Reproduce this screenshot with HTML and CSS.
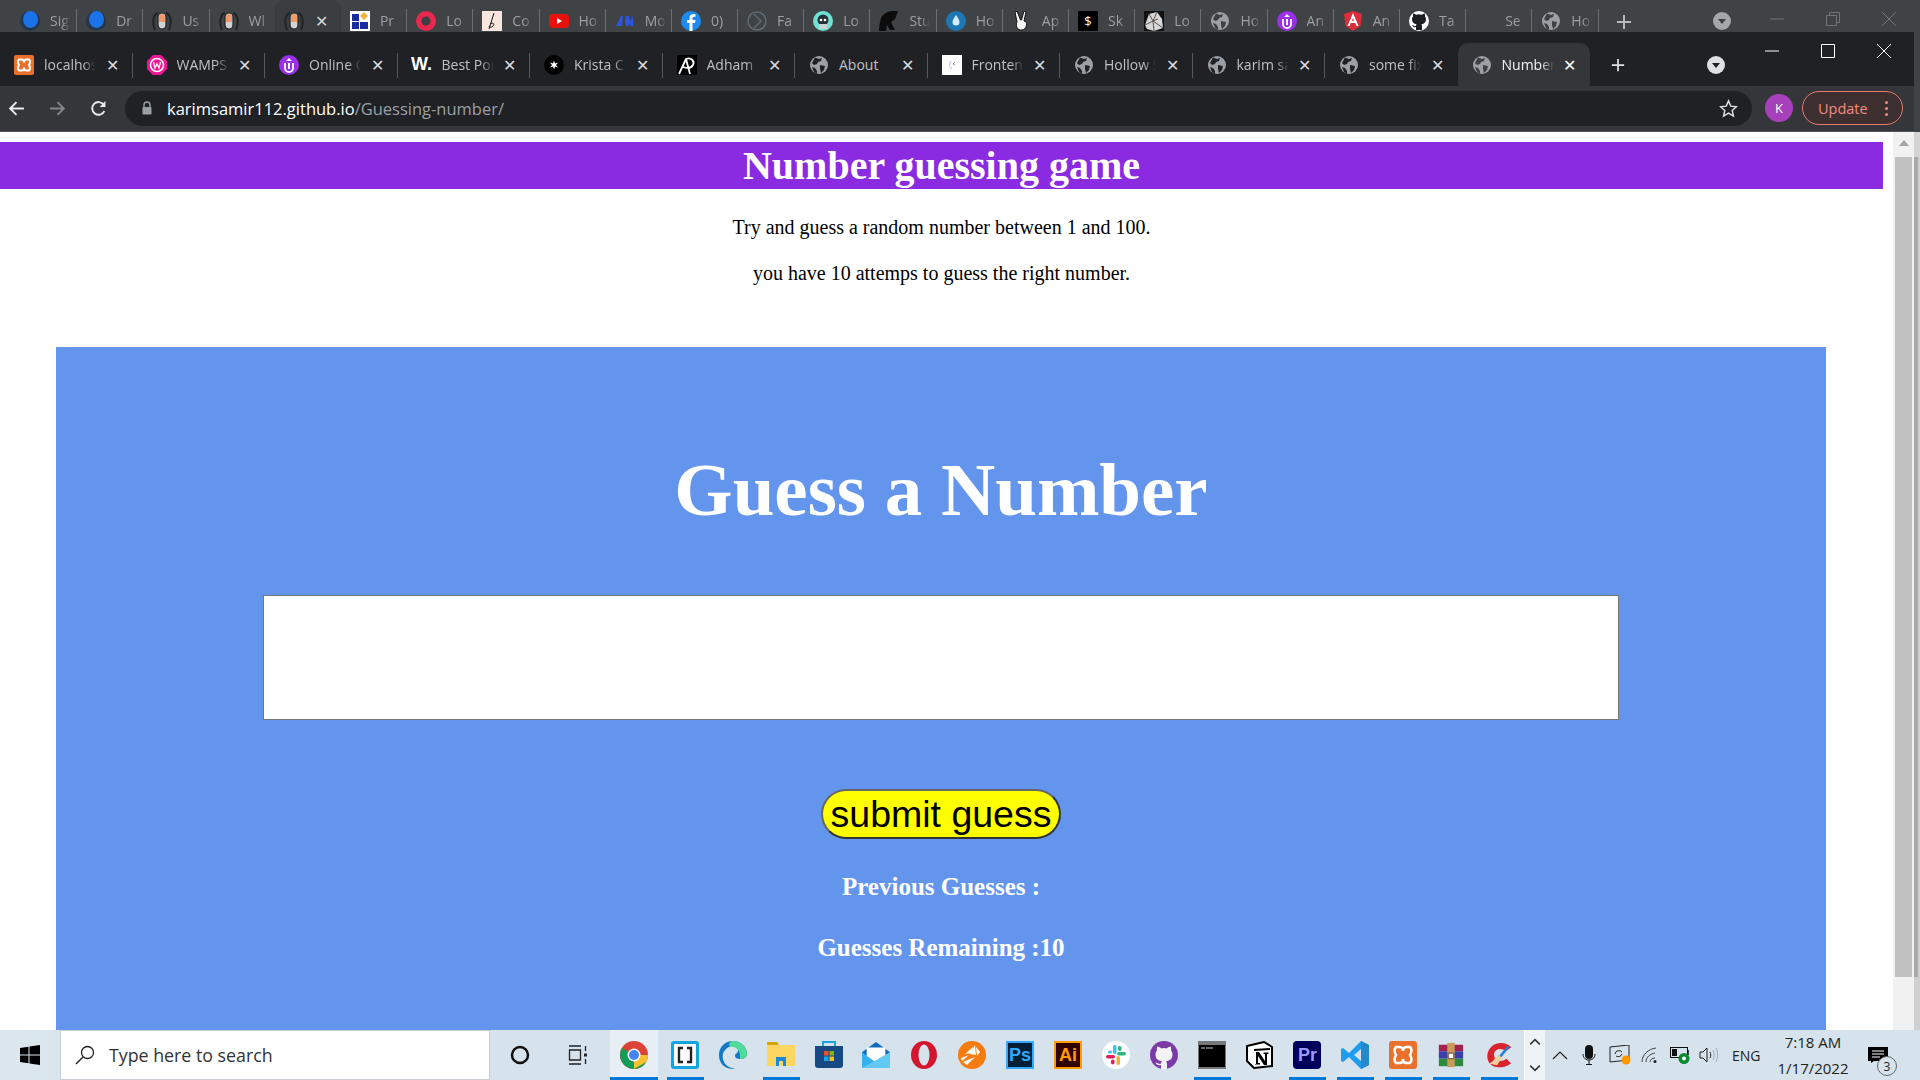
FILE: index.html
```html
<!DOCTYPE html>
<html lang="en">
<head>
<meta charset="utf-8">
<title>Number guessing game</title>
<link rel="stylesheet" href="styles.css">
</head>
<body>
<svg class="defs" width="0" height="0" aria-hidden="true">
  <symbol id="i-ball" viewBox="0 0 20 20"><circle cx="10" cy="10" r="10" fill="#26364a"/><ellipse cx="10.500" cy="8.500" rx="7.500" ry="8.500" fill="#1a73e8"/></symbol>
  <symbol id="i-pill" viewBox="0 0 20 20"><path d="M3 19C0 12 1 3 6 2M14 2c5 1 6 10 3 17" fill="none" stroke="#222" stroke-width="2"/><rect x="6" y="2" width="8" height="16" rx="4" fill="#cfd3d2" stroke="#222" stroke-width="1.200"/><path d="M7 6a3 3 0 0 1 6 0v5H7z" fill="#ee9a6d"/></symbol>
  <symbol id="i-grid" viewBox="0 0 20 20"><rect width="20" height="20" fill="#fff"/><path d="M2 3h7v7H2zM2 11h7v7H2zM10 11h8v7h-8z" fill="#1c2aa0"/><path d="M14 1l4 4-4 4-4-4z" fill="#f2b33d"/></symbol>
  <symbol id="i-ring" viewBox="0 0 20 20"><circle cx="10" cy="10" r="10" fill="#e8284f"/><circle cx="10" cy="10" r="4.500" fill="#3c4043"/><path d="M12 13l3 5-4 1z" fill="#e8284f"/></symbol>
  <symbol id="i-sign" viewBox="0 0 20 20"><rect width="20" height="20" fill="#f9e6df"/><path d="M12 2L7 18M8 13c3-2 5 0 3 2s-4 1-4 0" fill="none" stroke="#111" stroke-width="1"/></symbol>
  <symbol id="i-yt" viewBox="0 0 20 20"><rect y="3" width="20" height="14" rx="4" fill="#e8120c"/><path d="M8 7l5 3-5 3z" fill="#fff"/></symbol>
  <symbol id="i-mc" viewBox="0 0 20 20"><path d="M1 15L6 5h2l-1 10zM9 15l2-10h3l1 6 3-6v10h-3v-3l-2 3h-2l-1-5-1 5z" fill="#2c55e0"/></symbol>
  <symbol id="i-fb" viewBox="0 0 20 20"><circle cx="10" cy="10" r="10" fill="#1b8bf0"/><path d="M8.500 20v-8H6V9h2.500V7c0-3 1.700-4 4-4l2 .2v2.600h-1.300c-1.500 0-1.700.8-1.700 1.700V9h3l-.5 3h-2.500v8z" fill="#fff"/></symbol>
  <symbol id="i-chev" viewBox="0 0 20 20"><circle cx="10" cy="10" r="9" fill="none" stroke="#5f6a75" stroke-width="1.500"/><path d="M7 3l7 7-7 7" fill="none" stroke="#5f6a75" stroke-width="1.500"/></symbol>
  <symbol id="i-teal" viewBox="0 0 20 20"><circle cx="10" cy="10" r="10" fill="#6fe3d3"/><circle cx="10" cy="9" r="5.500" fill="#26303a"/><path d="M6 13h8v5H6z" fill="#c9d2d0"/><circle cx="8" cy="9" r="1.300" fill="#fff"/><circle cx="12" cy="9" r="1.300" fill="#fff"/></symbol>
  <symbol id="i-helm" viewBox="0 0 20 20"><path d="M19 0C13-1 5 1 2 7c-1 4-2 8-2 13h7l1-6 3 5h5l-4-8 4-3c1-3 2-5 3-8z" fill="#0c0c0c"/></symbol>
  <symbol id="i-drop" viewBox="0 0 20 20"><circle cx="10" cy="10" r="10" fill="#1f76b5"/><path d="M10 4c2 3 3.500 5 3.500 7a3.500 3.500 0 0 1-7 0c0-2 1.500-4 3.500-7z" fill="#d3ecfb"/></symbol>
  <symbol id="i-peace" viewBox="0 0 20 20"><path d="M5 0l3.500 9 1 0L12 0l2 1-2 9c3 1 3 3 2 6-1 3-6 4-8 2-2-2-2-5-1-7L3 1z" fill="#f6f6f6" stroke="#111" stroke-width="1"/></symbol>
  <symbol id="i-rock" viewBox="0 0 20 20"><rect width="20" height="20" fill="#111"/><path d="M1 14L5 3l8-2 5 7 1 9-9 3-7-2z" fill="#d7d7d7"/><path d="M5 3l4 7 4-9M1 14l8-4 10 7M9 10l1 10M14 8l-5 2" fill="none" stroke="#555" stroke-width="1"/></symbol>
  <symbol id="i-globe" viewBox="0 0 20 20"><circle cx="10" cy="10" r="9" fill="#9aa0a6"/><path d="M6 2.500l4 1.500 3-1-1 3-3 1-1 2-3 1-2-2zM11 10l5 1-1 4-3 3-1-4zM3 12l3 1 2 3v3l-3-2z" fill="#3c4043"/></symbol>
  <symbol id="i-globe2" viewBox="0 0 20 20"><circle cx="10" cy="10" r="9" fill="#9aa0a6"/><path d="M6 2.500l4 1.500 3-1-1 3-3 1-1 2-3 1-2-2zM11 10l5 1-1 4-3 3-1-4zM3 12l3 1 2 3v3l-3-2z" fill="#202124"/></symbol>
  <symbol id="i-u" viewBox="0 0 20 20"><circle cx="10" cy="10" r="10" fill="#9b30e8"/><path d="M6 8v5a4 4 0 0 0 8 0V8" fill="none" stroke="#fff" stroke-width="1.800"/><path d="M10 3l3 3H7zM9 8h2v6H9z" fill="#fff"/></symbol>
  <symbol id="i-ng" viewBox="0 0 20 20"><path d="M10 0l9 3-1.500 12L10 20l-7.500-5L1 3z" fill="#dd2c3a"/><path d="M10 2l-5.500 13h2l1.200-3h4.600l1.200 3h2zM9 10l1-3 1 3z" fill="#fff"/></symbol>
  <symbol id="i-gh" viewBox="0 0 20 20"><circle cx="10" cy="10" r="10" fill="#fff"/><path d="M7 19v-3c-3 .7-3.500-1.200-4-2 1-.3 1.500 1.200 4 1 0-1 .3-1.400.7-1.800-3-.5-4.700-1.700-4.700-5 0-1.200.4-2.200 1.100-3-.2-.6-.2-1.700.2-2.700 1.300 0 2.300.8 2.900 1.300a9 9 0 0 1 5.600 0c.6-.5 1.600-1.300 2.900-1.300.4 1 .4 2.100.2 2.700.7.800 1.100 1.800 1.100 3 0 3.300-1.700 4.500-4.700 5 .5.500.7 1.200.7 2.200V19z" fill="#1c1e21"/></symbol>
  <symbol id="i-xampp" viewBox="0 0 20 20"><rect width="20" height="20" rx="2" fill="#e9712c"/><path d="M5 4.500h3c2 0 2 3 2 3s0-3 2-3h3c2 2 1 4 0 5.500 1 1.500 2 3.500 0 5.500h-3c-2 0-2-3-2-3s0 3-2 3H5c-2-2-1-4 0-5.500-1-1.500-2-3.500 0-5.500z" fill="none" stroke="#fff" stroke-width="2"/></symbol>
  <symbol id="i-wamp" viewBox="0 0 20 20"><path d="M6 0h8l6 6v8l-6 6H6l-6-6V6z" fill="#f0149a"/><circle cx="10" cy="10" r="6.500" fill="none" stroke="#fff" stroke-width="1.500"/><path d="M6.500 7l1.500 6 2-4 2 4 1.500-6" fill="none" stroke="#fff" stroke-width="1.300"/></symbol>
  <symbol id="i-krista" viewBox="0 0 20 20"><circle cx="10" cy="10" r="10" fill="#000"/><path d="M10 5.500l1 3 3-1-2 2.500 2 2.500-3-1-1 3-1-3-3 1 2-2.500-2-2.500 3 1z" fill="#fff"/></symbol>
  <symbol id="i-ap" viewBox="0 0 20 20"><rect width="20" height="20" fill="#000"/><path d="M2 19L9 4c5-2 9 2 7 6s-7 3-10 2M9 4l4 15" fill="none" stroke="#fff" stroke-width="1.800"/></symbol>
  <symbol id="i-front" viewBox="0 0 20 20"><rect width="20" height="20" fill="#fff"/><path d="M9 6c-2 3-2 6 1 8" fill="none" stroke="#a9b4e4" stroke-width="1"/><path d="M13 7l-2 2 2 1" fill="none" stroke="#6f7bc4" stroke-width=".800"/></symbol>
</svg>

<div class="backbar">
  <div class="backtabs">
    <div class="btab"><svg class="fav"><use href="#i-ball"/></svg><span class="bname">Sig</span></div>
    <div class="btab"><svg class="fav"><use href="#i-ball"/></svg><span class="bname">Dr</span></div>
    <div class="btab"><svg class="fav"><use href="#i-pill"/></svg><span class="bname">Us</span></div>
    <div class="btab"><svg class="fav"><use href="#i-pill"/></svg><span class="bname">Wl</span></div>
    <div class="btab btab-active"><svg class="fav"><use href="#i-pill"/></svg><span class="bclose">✕</span></div>
    <div class="btab"><svg class="fav"><use href="#i-grid"/></svg><span class="bname">Pr</span></div>
    <div class="btab"><svg class="fav"><use href="#i-ring"/></svg><span class="bname">Lo</span></div>
    <div class="btab"><svg class="fav"><use href="#i-sign"/></svg><span class="bname">Co</span></div>
    <div class="btab"><svg class="fav"><use href="#i-yt"/></svg><span class="bname">Ho</span></div>
    <div class="btab"><svg class="fav"><use href="#i-mc"/></svg><span class="bname">Mo</span></div>
    <div class="btab"><svg class="fav"><use href="#i-fb"/></svg><span class="bname">0)</span></div>
    <div class="btab"><svg class="fav"><use href="#i-chev"/></svg><span class="bname">Fa</span></div>
    <div class="btab"><svg class="fav"><use href="#i-teal"/></svg><span class="bname">Lo</span></div>
    <div class="btab"><svg class="fav"><use href="#i-helm"/></svg><span class="bname">Stu</span></div>
    <div class="btab"><svg class="fav"><use href="#i-drop"/></svg><span class="bname">Ho</span></div>
    <div class="btab"><svg class="fav"><use href="#i-peace"/></svg><span class="bname">Ap</span></div>
    <div class="btab"><span class="favbox favbox-s">$</span><span class="bname">Sk</span></div>
    <div class="btab"><svg class="fav"><use href="#i-rock"/></svg><span class="bname">Lo</span></div>
    <div class="btab"><svg class="fav"><use href="#i-globe"/></svg><span class="bname">Ho</span></div>
    <div class="btab"><svg class="fav"><use href="#i-u"/></svg><span class="bname">An</span></div>
    <div class="btab"><svg class="fav"><use href="#i-ng"/></svg><span class="bname">An</span></div>
    <div class="btab"><svg class="fav"><use href="#i-gh"/></svg><span class="bname">Ta</span></div>
    <div class="btab"><span class="fav"></span><span class="bname">Se</span></div>
    <div class="btab"><svg class="fav"><use href="#i-globe"/></svg><span class="bname">Ho</span></div>
  </div>
  <svg class="back-plus" viewBox="0 0 16 16"><path d="M8 1v14M1 8h14" stroke="#b4b8bc" stroke-width="2"/></svg>
  <svg class="back-drop" viewBox="0 0 18 18"><circle cx="9" cy="9" r="9" fill="#a3a7ab"/><path d="M5 7h8l-4 5z" fill="#3c4043"/></svg>
  <div class="back-ctrl">
    <svg viewBox="0 0 14 14"><path d="M0 7h14" stroke="#70757a" stroke-width="1"/></svg>
    <svg viewBox="0 0 14 14"><path d="M.5 3.500h10v10H.5zM3.500 3.500v-3h10v10h-3" fill="none" stroke="#70757a" stroke-width="1"/></svg>
    <svg viewBox="0 0 14 14"><path d="M0 0l14 14M14 0L0 14" stroke="#70757a" stroke-width="1"/></svg>
  </div>
</div>

<div class="desk">
  <div class="window">
    <div class="tabstrip">
      <div class="tabs">
        <div class="tab"><svg class="fav"><use href="#i-xampp"/></svg><span class="tname">localhos</span><span class="tclose">✕</span></div>
        <div class="tab"><svg class="fav"><use href="#i-wamp"/></svg><span class="tname">WAMPS</span><span class="tclose">✕</span></div>
        <div class="tab"><svg class="fav"><use href="#i-u"/></svg><span class="tname">Online C</span><span class="tclose">✕</span></div>
        <div class="tab"><span class="favbox favbox-w">W.</span><span class="tname">Best Por</span><span class="tclose">✕</span></div>
        <div class="tab"><svg class="fav"><use href="#i-krista"/></svg><span class="tname">Krista C</span><span class="tclose">✕</span></div>
        <div class="tab"><svg class="fav"><use href="#i-ap"/></svg><span class="tname">Adham</span><span class="tclose">✕</span></div>
        <div class="tab"><svg class="fav"><use href="#i-globe2"/></svg><span class="tname tname-plain">About</span><span class="tclose">✕</span></div>
        <div class="tab"><svg class="fav"><use href="#i-front"/></svg><span class="tname">Fronten</span><span class="tclose">✕</span></div>
        <div class="tab"><svg class="fav"><use href="#i-globe2"/></svg><span class="tname">Hollow S</span><span class="tclose">✕</span></div>
        <div class="tab"><svg class="fav"><use href="#i-globe2"/></svg><span class="tname">karim sa</span><span class="tclose">✕</span></div>
        <div class="tab tab-pre"><svg class="fav"><use href="#i-globe2"/></svg><span class="tname">some fix</span><span class="tclose">✕</span></div>
        <div class="tab tab-active"><svg class="fav"><use href="#i-globe"/></svg><span class="tname">Number</span><span class="tclose">✕</span></div>
      </div>
      <svg class="new-tab" viewBox="0 0 16 16"><path d="M8 1v14M1 8h14" stroke="#dee1e6" stroke-width="2"/></svg>
      <svg class="tab-search" viewBox="0 0 18 18"><circle cx="9" cy="9" r="9" fill="#dee1e6"/><path d="M5 7h8l-4 5z" fill="#202124"/></svg>
      <div class="win-ctrl">
        <svg viewBox="0 0 14 14"><path d="M0 7h14" stroke="#fff" stroke-width="1"/></svg>
        <svg viewBox="0 0 14 14"><path d="M.5.500h13v13H.5z" fill="none" stroke="#fff" stroke-width="1"/></svg>
        <svg viewBox="0 0 14 14"><path d="M0 0l14 14M14 0L0 14" stroke="#fff" stroke-width="1"/></svg>
      </div>
    </div>

    <div class="toolbar">
      <svg class="nav" viewBox="0 0 16 16"><path d="M15 8H2M8 2L2 8l6 6" fill="none" stroke="#e8eaed" stroke-width="1.800"/></svg>
      <svg class="nav" viewBox="0 0 16 16"><path d="M1 8h13M8 2l6 6-6 6" fill="none" stroke="#80868b" stroke-width="1.800"/></svg>
      <svg class="nav" viewBox="0 0 16 16"><path d="M13.500 10.500A6 6 0 1 1 13 4.500" fill="none" stroke="#e8eaed" stroke-width="1.800"/><path d="M14.500 1v5.500H9z" fill="#e8eaed"/></svg>
      <div class="omnibox">
        <svg class="lock" viewBox="0 0 12 14"><path d="M3 6V4a3 3 0 0 1 6 0v2" fill="none" stroke="#9aa0a6" stroke-width="1.400"/><rect x="1.500" y="6" width="9" height="7.500" rx="1" fill="#9aa0a6"/></svg>
        <span class="url">karimsamir112.github.io<span class="url-path">/Guessing-number/</span></span>
        <svg class="star" viewBox="0 0 20 20"><path d="M10 2l2.400 5.500 6 .6-4.500 4 1.300 5.900-5.200-3.100L4.800 18l1.300-5.900-4.500-4 6-.6z" fill="none" stroke="#dee1e6" stroke-width="1.500"/></svg>
      </div>
      <span class="avatar">K</span>
      <div class="update"><span>Update</span><span class="dots"><i></i><i></i><i></i></span></div>
    </div>

    <div class="viewport">
      <main class="page">
        <h1 class="heading">Number guessing game</h1>
        <p class="lead">Try and guess a random number between 1 and 100.</p>
        <p class="lead">you have 10 attemps to guess the right number.</p>
        <section class="panel">
          <h2 class="title">Guess a Number</h2>
          <input class="guess" type="text" aria-label="guess">
          <button class="submit" type="button">submit guess</button>
          <p class="stat stat-first">Previous Guesses :</p>
          <p class="stat">Guesses Remaining :10</p>
        </section>
      </main>
      <div class="scrollbar">
        <svg class="sb-up" viewBox="0 0 10 6"><path d="M5 0l5 6H0z" fill="#a3a3a3"/></svg>
        <div class="thumb"></div>
      </div>
    </div>
  </div>
  <div class="edge">
    <div class="edge-top"></div>
    <div class="edge-gap"></div>
    <div class="edge-thumb"></div>
    <div class="edge-rest"></div>
  </div>
</div>

<footer class="taskbar">
  <div class="start"><svg viewBox="0 0 20 20"><path d="M0 3l8.500-1.300V9.500H0zM9.500 1.500L20 0v9.500H9.500zM0 10.500h8.500v7.800L0 17zM9.500 10.500H20V20L9.500 18.500z" fill="#000"/></svg></div>
  <div class="search">
    <svg viewBox="0 0 20 20"><circle cx="12.500" cy="7.500" r="6" fill="none" stroke="#222" stroke-width="1.300"/><path d="M8 12l-7 7" stroke="#222" stroke-width="1.500"/></svg>
    <span>Type here to search</span>
  </div>
  <div class="cortana"><svg viewBox="0 0 20 20"><circle cx="10" cy="10" r="8" fill="none" stroke="#111" stroke-width="2.500"/></svg></div>
  <div class="taskview"><svg viewBox="0 0 20 20"><path d="M1 1h12M1 19h12M1.500 5h11v10h-11z" fill="none" stroke="#222" stroke-width="1.300"/><path d="M17.500 1v5M17.500 14v5" stroke="#222" stroke-width="1.300"/><rect x="16" y="8.500" width="3" height="3" fill="#222"/></svg></div>
  <div class="apps">
    <div class="app app-active"><svg viewBox="0 0 28 28"><circle cx="14" cy="14" r="14" fill="#db4437"/><path d="M14 14L26.100 21A14 14 0 0 1 14 28 14 14 0 0 1 1.900 7z" fill="#0f9d58"/><path d="M14 14h14a14 14 0 0 1-1.900 7L14 28z" fill="#fbc02d"/><circle cx="14" cy="14" r="6.500" fill="#fff"/><circle cx="14" cy="14" r="5" fill="#4285f4"/></svg></div>
    <div class="app app-on"><svg viewBox="0 0 28 28"><rect width="28" height="28" rx="3" fill="#16a4dd"/><rect x="3" y="3" width="22" height="22" fill="#fff"/><path d="M12 7H8v14h4M16 7h4v14h-4" fill="none" stroke="#222" stroke-width="2.400"/></svg></div>
    <div class="app"><svg viewBox="0 0 28 28"><path d="M14 0c8 0 14 6 14 13 0 3-3 5-7 5-3 0-5-1-5-3 0-3 3-2 3-6C19 5 14 4 10 6 4 9 2 15 5 21c2 4 7 7 13 6-10 3-18-3-18-13C0 6 6 0 14 0z" fill="#1578c4"/><path d="M14 0c8 0 14 6 14 13 0 3-3 5-7 5 1-8-4-13-10-12C9 3 11 0 14 0z" fill="#4fdc9a"/></svg></div>
    <div class="app app-on"><svg viewBox="0 0 28 28"><path d="M0 1h10l2 3H0z" fill="#d9a40a"/><path d="M0 4h28v21H0z" fill="#fbd661"/><path d="M9 16h10v9h-3v-5h-4v5H9z" fill="#1d88d8"/></svg></div>
    <div class="app"><svg viewBox="0 0 28 28"><path d="M8 7V1h12v6" fill="none" stroke="#19a5e8" stroke-width="2"/><path d="M0 5h28v19a3 3 0 0 1-3 3H3a3 3 0 0 1-3-3z" fill="#174a82"/><path d="M9 10h4.500v4.500H9z" fill="#e8532b"/><path d="M14.500 10H19v4.500h-4.500z" fill="#7fba00"/><path d="M9 15.500h4.500V20H9z" fill="#19a5e8"/><path d="M14.500 15.500H19V20h-4.500z" fill="#fbbc09"/></svg></div>
    <div class="app"><svg viewBox="0 0 30 28"><path d="M0 11L15 0l15 11v17H0z" fill="#0f6cbd"/><path d="M5 6h20v12l-10 6-10-6z" fill="#fff"/><path d="M0 11l15 11 15-11v17H0z" fill="#35b1f0"/><path d="M30 11v17H0z" fill="#62c9f5"/></svg></div>
    <div class="app"><svg viewBox="0 0 26 28"><ellipse cx="13" cy="14" rx="13" ry="14" fill="#d3162d"/><ellipse cx="13" cy="14" rx="5.500" ry="10.500" fill="#d6e2ec"/></svg></div>
    <div class="app"><svg viewBox="0 0 28 28"><circle cx="14" cy="14" r="14" fill="#f57c10"/><path d="M3 17l8-3-7 6zM5 21l12-5-8 8zM12 13l5-9 1 10zM18 6l4 5-3 4zM7 13l8-7-1 6z" fill="#fff"/></svg></div>
    <div class="app"><div class="appbox appbox-ps">Ps</div></div>
    <div class="app"><div class="appbox appbox-ai">Ai</div></div>
    <div class="app"><svg viewBox="0 0 28 28"><circle cx="14" cy="14" r="14" fill="#fff"/><rect x="11" y="4" width="3.500" height="9" rx="1.700" fill="#36c5f0"/><rect x="4" y="14" width="9" height="3.500" rx="1.700" fill="#e01e5a"/><rect x="15" y="11" width="9" height="3.500" rx="1.700" fill="#2eb67d"/><rect x="14.500" y="15" width="3.500" height="9" rx="1.700" fill="#ecb22e"/><rect x="16" y="5" width="3.500" height="5" rx="1.700" fill="#2eb67d"/><rect x="6" y="9.500" width="4" height="3" rx="1.500" fill="#36c5f0"/><rect x="9" y="18.500" width="3.500" height="5" rx="1.700" fill="#e01e5a"/></svg></div>
    <div class="app"><svg viewBox="0 0 28 28"><circle cx="14" cy="14" r="14" fill="#7b3aa6"/><path d="M11 28v-4c-4 1-5-1.500-5.500-2.500 1.500-.3 2 1.500 5.500 1.300 0-1.300.4-1.900 1-2.500-4-.6-6.500-2.300-6.500-6.800 0-1.600.5-3 1.500-4.100-.3-.9-.3-2.400.3-3.800 1.800 0 3.200 1.100 4 1.800a12 12 0 0 1 5.400 0c.8-.7 2.200-1.800 4-1.800.6 1.400.6 2.900.3 3.800 1 1.100 1.500 2.500 1.500 4.100 0 4.500-2.500 6.200-6.500 6.800.7.700 1 1.700 1 3V28z" fill="#f3f3f3"/></svg></div>
    <div class="app app-on"><svg viewBox="0 0 28 28"><rect width="28" height="28" fill="#777"/><rect x="1" y="4" width="26" height="22" fill="#000"/><path d="M3 7h4M8 7h7" stroke="#ccc" stroke-width="1"/></svg></div>
    <div class="app"><svg viewBox="0 0 28 28"><path d="M1 5l17-4 8 5v19l-18 2-7-7z" fill="#fff" stroke="#000" stroke-width="2"/><path d="M8 9l16-1" stroke="#000" stroke-width="2"/><path d="M10 11h3l6 9v-7h-1.500v-1.500h5V13H21v11h-3l-6-9v7h2v1.500H9V23h1z" fill="#000"/></svg></div>
    <div class="app app-on"><div class="appbox appbox-pr">Pr</div></div>
    <div class="app app-on"><svg viewBox="0 0 28 28"><path d="M20 0l8 4v20l-8 4L8 16l-6 5-2-1V8l2-1 6 5z" fill="#1f9cf0"/><path d="M20 8l-7 6 7 6z" fill="#d6e2ec"/><path d="M20 0l8 4v20l-8 4z" fill="#2489ca"/></svg></div>
    <div class="app app-on"><svg viewBox="0 0 28 28"><rect width="28" height="28" rx="3" fill="#e9712c"/><path d="M7 6h4c3 0 3 4 3 4s0-4 3-4h4c3 3 1 6 0 8 1 2 3 5 0 8h-4c-3 0-3-4-3-4s0 4-3 4H7c-3-3-1-6 0-8-1-2-3-5 0-8z" fill="none" stroke="#fff" stroke-width="2.500"/></svg></div>
    <div class="app app-on"><svg viewBox="0 0 30 28"><path d="M2 3h26v7H2z" fill="#a2224f"/><path d="M2 10h26v8H2z" fill="#3c3fa8"/><path d="M2 18h26v8H2z" fill="#2c8a3c"/><path d="M11 1h8v26h-8z" fill="#c99a5a"/><path d="M12 12h6v6h-6z" fill="#fff" stroke="#5a3d1e"/></svg></div>
    <div class="app app-on"><svg viewBox="0 0 30 28"><path d="M28 6C24 0 12-1 6 6c-6 7-4 17 3 20 5 2 12 2 19-3l-5-5c-4 3-8 3-11 1-3-3-3-8 0-10 3-2 7-2 10 1z" fill="#d8242d"/><path d="M24 4l2 2-9 11-2-2z" fill="#2c7ed6"/><path d="M15 14l3 3-5 8-9-2c3-1 5-2 6-5z" fill="#f2d19f"/></svg></div>
  </div>
  <div class="tray-scroll"><svg viewBox="0 0 10 6"><path d="M1 5l4-4 4 4" fill="none" stroke="#333" stroke-width="1.300"/></svg><svg viewBox="0 0 10 6"><path d="M1 1l4 4 4-4" fill="none" stroke="#333" stroke-width="1.300"/></svg></div>
  <div class="tray">
    <svg class="t-arrow" viewBox="0 0 16 10"><path d="M1 9l7-7 7 7" fill="none" stroke="#222" stroke-width="1.200"/></svg>
    <svg class="t-mic" viewBox="0 0 14 20"><rect x="3" y="0" width="8" height="14" rx="4" fill="#111"/><path d="M1 9c0 8 12 8 12 0M7 15v4M4 19.500h6" fill="none" stroke="#111" stroke-width="1"/></svg>
    <svg class="t-sync" viewBox="0 0 22 20"><path d="M1 2l19-2v15L1 17z" fill="none" stroke="#222" stroke-width="1"/><path d="M6 9a4 4 0 0 1 7-2M13 9a4 4 0 0 1-6 2" fill="none" stroke="#222" stroke-width="1"/><circle cx="17" cy="15" r="4.500" fill="#ff9800"/></svg>
    <svg class="t-wifi" viewBox="0 0 20 16"><path d="M1 15C1 8 7 2 15 1M5 15c0-5 4-8 9-9M9 15c0-2 2-4 5-4" fill="none" stroke="#444" stroke-width="1"/><circle cx="14" cy="14.500" r="1.500" fill="#222"/></svg>
    <svg class="t-batt" viewBox="0 0 20 18"><rect x=".500" y="1.500" width="17" height="10" fill="none" stroke="#111"/><rect x="2" y="3" width="5" height="7" fill="#111"/><path d="M18 4v5" stroke="#111" stroke-width="1.500"/><circle cx="14" cy="12.500" r="5.500" fill="#0a8a32"/><circle cx="14" cy="12.500" r="2" fill="#fff"/></svg>
    <svg class="t-vol" viewBox="0 0 20 16"><path d="M1 5h3l4-4v14l-4-4H1z" fill="none" stroke="#222" stroke-width="1"/><path d="M11 5c1 2 1 4 0 6" fill="none" stroke="#222"/><path d="M14 3c1.500 3 1.500 7 0 10M17 1c2 4 2 10 0 14" fill="none" stroke="#aaa"/></svg>
    <span class="lang">ENG</span>
    <div class="clock"><span>7:18 AM</span><span>1/17/2022</span></div>
    <div class="notif"><svg viewBox="0 0 20 16"><path d="M0 0h20v14H6l-3 2v-2H0z" fill="#000"/><path d="M4 4h12M4 7h12M4 10h8" stroke="#fff" stroke-width="1"/></svg><span class="badge">3</span></div>
  </div>
</footer>
</body>
</html>
```
FILE: styles.css
```css
* { box-sizing: border-box; }
html, body { margin: 0; height: 100%; }
body {
  width: 1920px;
  height: 1080px;
  display: flex;
  flex-direction: column;
  overflow: hidden;
  font-family: "Open Sans", "Noto Sans", sans-serif;
  background: #fff;
}
.defs { position: absolute; }
.fav { width: 20px; height: 20px; flex: none; display: block; }
.favbox { width: 20px; height: 20px; flex: none; display: flex; align-items: center; justify-content: center; }
.favbox-s { background: #000; color: #fff; font-size: 13px; }
.favbox-w { color: #fff; font: 700 18px "Liberation Sans", sans-serif; }

/* back window */
.backbar {
  height: 32px;
  flex: none;
  background: #3f4346;
  display: flex;
  overflow: hidden;
}
.backtabs { display: flex; margin-left: 11px; }
.btab {
  width: 66.200px;
  height: 32px;
  display: flex;
  align-items: center;
  gap: 10px;
  padding: 10px 0 0 9px;
  position: relative;
  flex: none;
}
.btab::after {
  content: "";
  position: absolute;
  right: 0;
  top: 9px;
  bottom: 0;
  width: 1px;
  background: #6a6e72;
}
.btab-active { background: #3a3d40; border-radius: 9px 9px 0 0; margin-left: -1px; }
.btab-active::after, .btab:nth-child(4)::after { display: none; }
.bname {
  font-size: 14px;
  color: #9aa0a6;
  width: 21px;
  overflow: hidden;
  white-space: nowrap;
  transform: translateY(-1px);
  mask-image: linear-gradient(to right, #000 55%, transparent);
}
.bclose { color: #d3d5d8; font-size: 16px; margin-left: 1px; }
.back-plus { width: 16px; height: 16px; margin: 14px 0 0 17px; flex: none; }
.back-drop { width: 18px; height: 18px; margin: 12px 0 0 81px; flex: none; }
.back-ctrl { display: flex; gap: 42px; margin: 12px 0 0 39px; flex: none; }
.back-ctrl svg { width: 14px; height: 14px; display: block; }

/* front window */
.desk { flex: 1; display: flex; min-height: 0; }
.window { flex: 1; display: flex; flex-direction: column; min-width: 0; }
.edge { width: 6px; flex: none; display: flex; flex-direction: column; }
.edge-top { height: 100px; background: #3f4346; }
.edge-gap { height: 25px; background: #d4d4d4; }
.edge-thumb { height: 820px; background: linear-gradient(to right, #a9a9a9 70%, #d0d0d0 70%); }
.edge-rest { flex: 1; background: #d0d0d0; }

.tabstrip {
  height: 54px;
  flex: none;
  background: #202124;
  display: flex;
}
.tabs { display: flex; align-self: flex-end; }
.tab {
  width: 132.500px;
  height: 43px;
  display: flex;
  align-items: center;
  padding: 0 14px 0 14px;
  position: relative;
  flex: none;
}
.tab::after {
  content: "";
  position: absolute;
  right: 0;
  top: 10px;
  height: 25px;
  width: 1px;
  background: #55585c;
}
.tab-pre::after, .tab-active::after { display: none; }
.tab-active { background: #35363a; border-radius: 10px 10px 0 0; }
.tname {
  margin-left: 10px;
  width: 52px;
  font-size: 14px;
  color: #bdc1c6;
  overflow: hidden;
  white-space: nowrap;
  mask-image: linear-gradient(to right, #000 75%, transparent);
  margin-top: -1px;
}
.tname-plain { mask-image: none; }
.tab-active .tname { color: #f1f3f4; }
.tclose { margin-left: auto; font-size: 16px; color: #dadce0; line-height: 1; }
.tab-active .tclose { color: #fff; }
.new-tab { width: 14px; height: 14px; margin: 26px 0 0 21px; flex: none; }
.tab-search { width: 18px; height: 18px; margin: 24px 0 0 82px; flex: none; }
.win-ctrl { display: flex; gap: 42px; margin: 12px 0 0 40px; flex: none; }
.win-ctrl svg { width: 14px; height: 14px; display: block; }

.toolbar {
  height: 46px;
  flex: none;
  background: #35363a;
  border-bottom: 1px solid #555;
  display: flex;
  align-items: center;
  padding: 0 11px 1px 8px;
}
.nav { width: 17px; height: 17px; flex: none; margin-right: 24px; }
.omnibox {
  flex: 1;
  height: 35px;
  margin-left: -6px;
  background: #202124;
  border-radius: 18px;
  display: flex;
  align-items: center;
  padding: 0 14px 0 16px;
}
.lock { width: 12px; height: 14px; flex: none; }
.url { font-size: 16.500px; color: #fff; margin-left: 14px; }
.url-path { color: #9aa0a6; }
.star { width: 19px; height: 19px; margin-left: auto; flex: none; }
.avatar {
  width: 28px;
  height: 28px;
  border-radius: 50%;
  background: #a740bb;
  color: #fff;
  font-size: 13px;
  display: flex;
  align-items: center;
  justify-content: center;
  margin-left: 13px;
  flex: none;
}
.update {
  width: 101px;
  height: 34px;
  margin-left: 9px;
  flex: none;
  border: 1px solid #e8776c;
  border-radius: 17px;
  background: #3e2f30;
  color: #f28b82;
  font-size: 14.500px;
  display: flex;
  align-items: center;
  padding: 0 14px 0 15px;
}
.dots { margin-left: auto; display: flex; flex-direction: column; gap: 3px; }
.dots i { width: 3px; height: 3px; border-radius: 50%; background: #f28b82; display: block; }

/* page */
.viewport { flex: 1; display: flex; min-height: 0; }
.page {
  flex: 1;
  min-width: 0;
  background: #fff;
  padding-top: 10px;
  padding-right: 10px;
  overflow: hidden;
  font-family: "Liberation Serif", serif;
}
.heading {
  margin: 0;
  height: 47px;
  line-height: 47px;
  background: #8a2be2;
  color: #fff;
  font-size: 40px;
  font-weight: 700;
  text-align: center;
}
.lead {
  margin: 0;
  height: 46px;
  line-height: 46px;
  font-size: 20px;
  text-align: center;
  color: #000;
  transform: translateY(15px);
}
.panel {
  margin: 66px 57px 0 56px;
  height: 800px;
  background: #6495ed;
  display: flex;
  flex-direction: column;
  align-items: center;
  padding-top: 102px;
  color: #fff;
}
.title { margin: 0; font-size: 75px; line-height: 82px; font-weight: 700; }
.guess {
  width: 1356px;
  height: 125px;
  margin-top: 64px;
  background: #fff;
  border: 1px solid #767676;
  padding: 0;
}
.submit {
  margin-top: 69px;
  width: 240px;
  height: 50px;
  border-radius: 25px;
  border: 2px solid #333;
  border-top-color: #666;
  border-left-color: #666;
  background: #ff0;
  color: #000;
  padding: 2px 0 0;
  font: 37.500px/1 "Liberation Sans", sans-serif;
}
.stat { margin: 0; height: 62px; line-height: 62px; font-size: 25px; font-weight: 700; text-align: center; }
.stat-first { margin-top: 17px; height: 61px; }

.scrollbar { width: 21px; flex: none; background: #f1f1f1; display: flex; flex-direction: column; align-items: center; padding-top: 8px; }
.sb-up { width: 10px; height: 6px; flex: none; }
.thumb { width: 17px; height: 820px; background: #c1c1c1; margin-top: 11px; flex: none; }

/* taskbar */
.taskbar {
  height: 50px;
  flex: none;
  background: linear-gradient(to right, #dce7ee, #d6e2ec 10%);
  display: flex;
  align-items: stretch;
}
.start { width: 60px; flex: none; display: flex; align-items: center; justify-content: center; }
.start svg { width: 20px; height: 20px; }
.search {
  width: 430px;
  flex: none;
  background: #fff;
  border: 1px solid #c8ced3;
  display: flex;
  align-items: center;
  padding-left: 14px;
  color: #333;
  font-size: 17.800px;
}
.search svg { width: 20px; height: 20px; margin-right: 14px; flex: none; }
.cortana { width: 59px; flex: none; display: flex; align-items: center; justify-content: center; }
.cortana svg { width: 20px; height: 20px; }
.taskview { width: 58px; flex: none; display: flex; align-items: center; justify-content: center; }
.taskview svg { width: 20px; height: 20px; }
.apps { display: flex; width: 916px; margin-right: 1px; flex: none; }
.app { flex: 1; position: relative; display: flex; align-items: center; justify-content: center; }
.app svg { width: 28px; height: 28px; display: block; }
.app-on::after { content: ""; position: absolute; left: 6px; right: 5px; bottom: 0; height: 3px; background: #0078d7; }
.app-active { background: #e8eff4; margin: 0 3px; }
.app-active::after { content: ""; position: absolute; left: 0; right: 0; bottom: 0; height: 3px; background: #0078d7; }
.appbox { width: 28px; height: 28px; display: flex; align-items: center; justify-content: center; font: 700 18px "Liberation Sans", sans-serif; }
.appbox-ps { background: #001e36; color: #31a8ff; border: 2px solid #31a8ff; }
.appbox-ai { background: #330000; color: #ff9a00; border: 2px solid #ff9a00; }
.appbox-pr { background: #00005b; color: #9999ff; border-radius: 4px; }
.tray-scroll { width: 21px; flex: none; background: #eef3f6; border-left: 1px solid #fff; display: flex; flex-direction: column; justify-content: space-between; align-items: center; padding: 8px 0 8px; }
.tray-scroll svg { width: 12px; height: 8px; }
.tray { flex: 1; display: flex; align-items: center; }
.t-arrow { width: 16px; height: 10px; margin-left: 7px; }
.t-mic { width: 14px; height: 20px; margin-left: 14px; }
.t-sync { width: 22px; height: 20px; margin-left: 13px; }
.t-wifi { width: 20px; height: 16px; margin-left: 10px; }
.t-batt { width: 20px; height: 18px; margin-left: 9px; }
.t-vol { width: 20px; height: 16px; margin-left: 9px; }
.lang { margin-left: 13px; font-size: 14px; color: #222; width: 30px; }
.clock { display: flex; flex-direction: column; align-items: center; width: 68px; margin-left: 17px; font-size: 15px; line-height: 26px; color: #222; flex: none; white-space: nowrap; }
.notif { position: relative; width: 20px; height: 16px; margin-left: 21px; }
.notif svg { width: 20px; height: 16px; display: block; }
.badge { position: absolute; left: 9px; top: 9px; width: 20px; height: 20px; border-radius: 50%; background: #d6e2ec; border: 1px solid #666; font-size: 12px; display: flex; align-items: center; justify-content: center; color: #222; }
```
